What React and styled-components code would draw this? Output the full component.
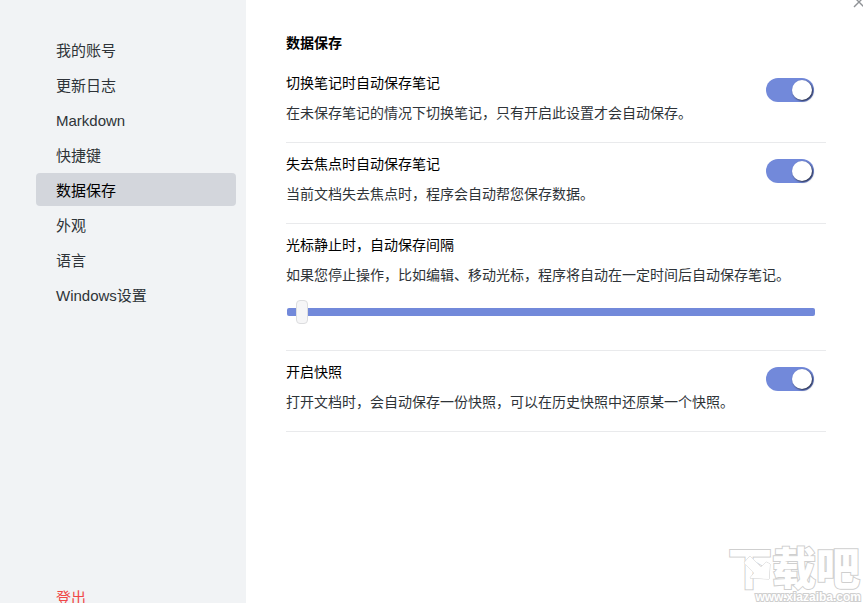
import React, { useState } from "react";
import styled, { createGlobalStyle } from "styled-components";

const navItems = [
  "我的账号",
  "更新日志",
  "Markdown",
  "快捷键",
  "数据保存",
  "外观",
  "语言",
  "Windows设置",
];

const settings = [
  {
    id: "save-on-switch",
    type: "toggle",
    title: "切换笔记时自动保存笔记",
    text: "在未保存笔记的情况下切换笔记，只有开启此设置才会自动保存。",
  },
  {
    id: "save-on-blur",
    type: "toggle",
    title: "失去焦点时自动保存笔记",
    text: "当前文档失去焦点时，程序会自动帮您保存数据。",
  },
  {
    id: "save-interval",
    type: "range",
    title: "光标静止时，自动保存间隔",
    text: "如果您停止操作，比如编辑、移动光标，程序将自动在一定时间后自动保存笔记。",
  },
  {
    id: "snapshot",
    type: "toggle",
    title: "开启快照",
    text: "打开文档时，会自动保存一份快照，可以在历史快照中还原某一个快照。",
  },
];

const Setting = ({ data }) => {
  const [checked, setChecked] = useState(true);
  const [seconds, setSeconds] = useState(2);

  return (
    <Row>
      <RowText>
        <RowTitle htmlFor={data.id}>{data.title}</RowTitle>
        <RowNote>{data.text}</RowNote>
        {data.type === "range" && (
          <Slider
            id={data.id}
            min="1"
            max="60"
            value={seconds}
            onChange={(e) => setSeconds(Number(e.target.value))}
          />
        )}
      </RowText>
      {data.type === "toggle" && (
        <Toggle
          id={data.id}
          checked={checked}
          onChange={(e) => setChecked(e.target.checked)}
        />
      )}
    </Row>
  );
};

const App = () => {
  const [active, setActive] = useState("数据保存");

  return (
    <>
      <GlobalStyle />
      <Layout>
        <Sidebar>
          <Nav>
            {navItems.map((item) => (
              <NavButton
                key={item}
                $active={item === active}
                onClick={() => setActive(item)}
              >
                {item}
              </NavButton>
            ))}
          </Nav>
          <LogoutButton>登出</LogoutButton>
        </Sidebar>
        <Content>
          <Heading>数据保存</Heading>
          {settings.map((item) => (
            <Setting key={item.id} data={item} />
          ))}
        </Content>
        <CloseButton aria-label="关闭">
          <svg width="12" height="12" viewBox="0 0 12 12">
            <path d="M1 1l10 10M11 1L1 11" stroke="#8f9296" strokeWidth="1.4" />
          </svg>
        </CloseButton>
        <Watermark>
          <WatermarkName>下载吧</WatermarkName>
          <WatermarkSite>www.xiazaiba.com</WatermarkSite>
          <WatermarkArrow viewBox="0 0 28 26">
            <path d="M7 1l11 11 5-5 4 2-1 15-19-1 4-5L1 8z" />
          </WatermarkArrow>
        </Watermark>
      </Layout>
    </>
  );
};

export default App;

const GlobalStyle = createGlobalStyle`
  * {
    box-sizing: border-box;
  }

  body {
    margin: 0;
    background: #fff;
    color: #000;
    font-family: "Liberation Sans", "Noto Sans CJK SC", sans-serif;
    font-size: 14px;
  }

  button {
    border: 0;
    background: none;
    font-family: inherit;
    cursor: pointer;
  }
`;

const Layout = styled.div`
  position: relative;
  display: flex;
  height: 100vh;
  overflow: hidden;
`;

const Sidebar = styled.aside`
  display: flex;
  flex: 0 0 246px;
  flex-direction: column;
  justify-content: space-between;
  padding: 33px 10px 0 36px;
  background: #f1f3f5;
`;

const Nav = styled.nav`
  display: flex;
  flex-direction: column;
  gap: 2px;
`;

const NavButton = styled.button`
  height: 33px;
  padding: 2px 20px 0;
  border-radius: 4px;
  background: ${({ $active }) => ($active ? "#d3d6dc" : "transparent")};
  color: ${({ $active }) => ($active ? "#000" : "#2e3338")};
  font-size: 15px;
  line-height: 31px;
  text-align: left;
`;

const LogoutButton = styled(NavButton)`
  flex-shrink: 0;
  margin-bottom: -10px;
  color: #f04747;
`;

const Content = styled.main`
  flex: 1;
  min-width: 0;
  padding: 33px 37px 0 40px;
`;

const Heading = styled.h1`
  margin: 0 0 9px;
  font-size: 14px;
  line-height: 20px;
`;

const Row = styled.section`
  display: flex;
  align-items: flex-start;
  justify-content: space-between;
  padding: 11px 11px 17px 0;
  border-bottom: 1px solid #e9eaec;
`;

const RowText = styled.div`
  flex: 1;
  min-width: 0;
`;

const RowTitle = styled.label`
  display: block;
  line-height: 20px;
`;

const RowNote = styled.p`
  margin: 8px 0 0;
  color: #2e3338;
  line-height: 24px;
  white-space: nowrap;
`;

const Toggle = styled.input.attrs({ type: "checkbox", role: "switch" })`
  flex-shrink: 0;
  width: 48px;
  height: 24px;
  margin: 5px 1px 0 0;
  border-radius: 12px;
  background: ${({ checked }) => (checked ? "#7289da" : "#b9bbbe")};
  appearance: none;
  cursor: pointer;

  &::before {
    display: block;
    width: 20px;
    height: 20px;
    margin: 2px;
    margin-left: ${({ checked }) => (checked ? "26px" : "2px")};
    border-radius: 50%;
    background: #fff;
    box-shadow: 1px 1px 2px rgba(0, 0, 0, 0.7);
    content: "";
  }
`;

const Slider = styled.input.attrs({ type: "range" })`
  display: block;
  width: calc(100% - 1px);
  height: 24px;
  margin: 13px 0 9px 1px;
  background: transparent;
  appearance: none;
  cursor: pointer;

  &::-webkit-slider-runnable-track {
    height: 8px;
    border-radius: 2px;
    background: #7289da;
  }

  &::-webkit-slider-thumb {
    width: 12px;
    height: 24px;
    margin-top: -8px;
    border: 1px solid #dcdddf;
    border-radius: 4px;
    background: #f6f6f7;
    appearance: none;
  }
`;

const CloseButton = styled.button`
  position: absolute;
  top: -4px;
  right: -2px;
  display: flex;
  padding: 0;
`;

/* outlined mark over the bottom right corner */
const Watermark = styled.div`
  position: absolute;
  right: 2px;
  bottom: 0;
  display: flex;
  flex-direction: column;
  gap: 4px;
  width: 133px;
  color: #fff;
  font-weight: 900;
  pointer-events: none;
  -webkit-text-stroke: 2px #cfcfcf;
  paint-order: stroke fill;
`;

const WatermarkName = styled.div`
  font-family: "Noto Sans CJK SC", sans-serif;
  font-size: 44px;
  line-height: 42px;
  white-space: nowrap;
`;

const WatermarkSite = styled.div`
  font-size: 12px;
  line-height: 12px;
  text-align: right;
`;

const WatermarkArrow = styled.svg`
  position: absolute;
  top: 10px;
  left: 15px;
  width: 28px;
  fill: #fff;
  stroke: #cfcfcf;
`;
